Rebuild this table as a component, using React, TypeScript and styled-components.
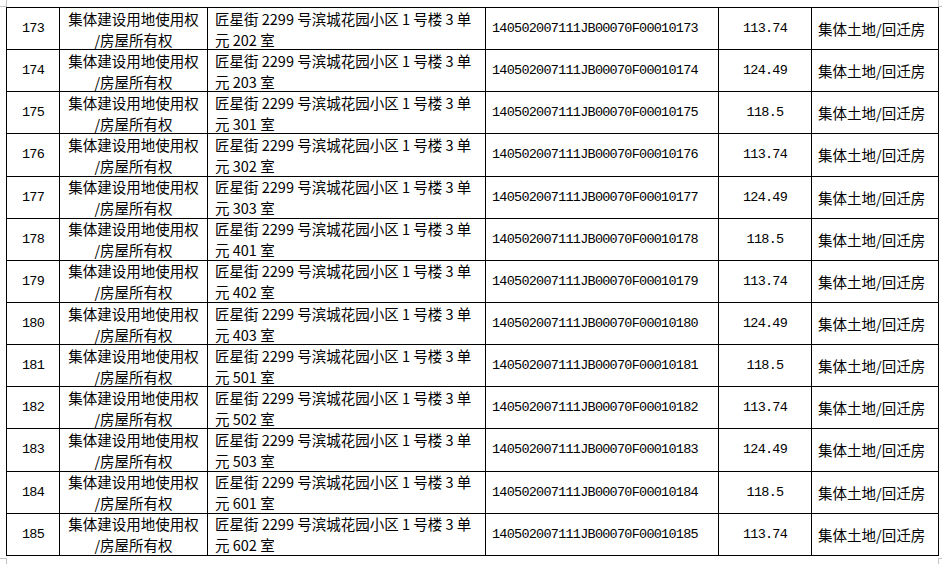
import React from 'react';
import styled, { createGlobalStyle, css } from 'styled-components';

const GlobalStyle = createGlobalStyle`
  html, body {
    margin: 0;
    padding: 0;
    background: #ffffff;
  }
  body {
    font-family: "Noto Sans CJK SC", "Liberation Sans", sans-serif;
    color: #000000;
  }
`;

const Page = styled.div`
  position: relative;
  width: 942px;
  height: 564px;
  padding: 7px 0 0 6px;
  box-sizing: border-box;
  overflow: hidden;
  background: #ffffff;
`;

type Corner = 'tl' | 'tr' | 'bl' | 'br';

const CropMark = styled.div<{ $corner: Corner }>`
  position: absolute;
  width: 7px;
  height: 7px;
  box-sizing: border-box;
  border: 0 solid #c4c4c4;
  ${({ $corner }) => $corner === 'tl' && css`left: 0; top: 0; border-right-width: 1px; border-bottom-width: 1px;`}
  ${({ $corner }) => $corner === 'tr' && css`left: 938px; top: 0; border-left-width: 1px; border-bottom-width: 1px;`}
  ${({ $corner }) => $corner === 'bl' && css`left: 0; top: 558px; border-right-width: 1px; border-top-width: 1px;`}
  ${({ $corner }) => $corner === 'br' && css`left: 938px; top: 558px; border-left-width: 1px; border-top-width: 1px;`}
`;

const Table = styled.div`
  display: flex;
  flex-direction: column;
  width: 933px;
  border-top: 1px solid #000;
  border-left: 1px solid #000;
  box-sizing: border-box;
`;

const Row = styled.div`
  display: grid;
  grid-template-columns: 53px 148px 278px 233px 93px 127px;
  height: 42.15px;
`;

const Cell = styled.div<{ $align?: 'left' | 'center'; $pad?: number }>`
  display: flex;
  flex-direction: column;
  justify-content: center;
  align-items: ${({ $align }) => ($align === 'left' ? 'flex-start' : 'center')};
  padding-left: ${({ $pad }) => $pad ?? 0}px;
  border-right: 1px solid #000;
  border-bottom: 1px solid #000;
  box-sizing: border-box;
  overflow: hidden;
  min-width: 0;
`;

const Mono = styled.span`
  font-family: "Liberation Mono", "DejaVu Sans Mono", monospace;
  font-size: 13.5px;
  letter-spacing: -0.75px;
  line-height: 21px;
  white-space: nowrap;
`;

const CnLine = styled.span`
  font-family: "Noto Sans CJK SC", "Liberation Sans", sans-serif;
  font-size: 14.5px;
  line-height: 21px;
  white-space: nowrap;
`;

const UseText = styled(CnLine)`
  font-size: 14.5px;
  letter-spacing: 0;
`;

const areas = ['113.74', '124.49', '118.5'];

const rows = Array.from({ length: 13 }, (_, i) => {
  const no = 173 + i;
  const k = i + 1;
  const floor = 2 + Math.floor(k / 3);
  const unit = (k % 3) + 1;
  return {
    no,
    room: `${floor}0${unit}`,
    id: `140502007111JB00070F00010${no}`,
    area: areas[i % 3],
  };
});

function App() {
  return (
    <>
      <GlobalStyle />
      <Page>
        <CropMark $corner="tl" />
        <CropMark $corner="tr" />
        <CropMark $corner="bl" />
        <CropMark $corner="br" />
        <Table>
          {rows.map((r) => (
            <Row key={r.no}>
              <Cell>
                <Mono>{r.no}</Mono>
              </Cell>
              <Cell>
                <CnLine>集体建设用地使用权</CnLine>
                <CnLine>/房屋所有权</CnLine>
              </Cell>
              <Cell $align="left" $pad={7}>
                <CnLine>匠星街 2299 号滨城花园小区 1 号楼 3 单</CnLine>
                <CnLine>元 {r.room} 室</CnLine>
              </Cell>
              <Cell $align="left" $pad={6}>
                <Mono>{r.id}</Mono>
              </Cell>
              <Cell>
                <Mono>{r.area}</Mono>
              </Cell>
              <Cell $align="left" $pad={6}>
                <UseText>集体土地/回迁房</UseText>
              </Cell>
            </Row>
          ))}
        </Table>
      </Page>
    </>
  );
}

export default App;
